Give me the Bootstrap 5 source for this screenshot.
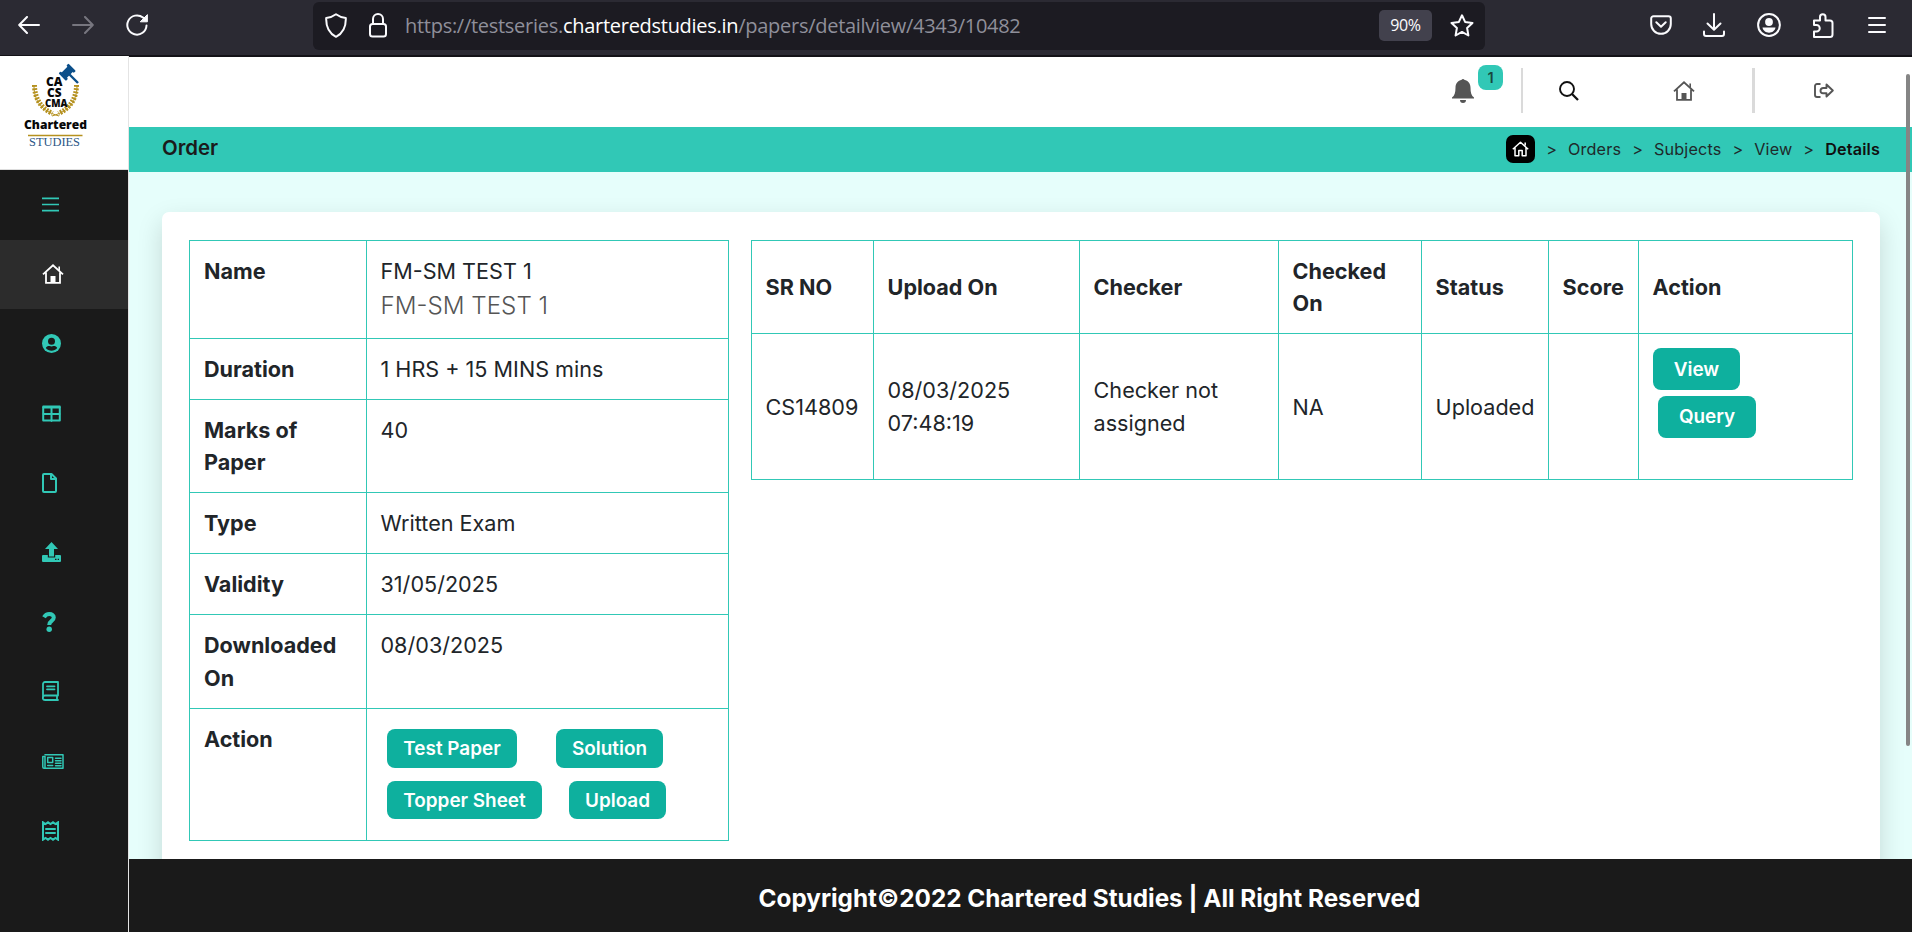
<!DOCTYPE html>
<html lang="en">
<head>
<meta charset="utf-8">
<meta name="viewport" content="width=device-width, initial-scale=1">
<title>Order details</title>
<link href="https://cdn.jsdelivr.net/npm/bootstrap@5.3.0/dist/css/bootstrap.min.css" rel="stylesheet">
<style>
:root{--teal:#31c8b6;--deep:#0eb09e;--ink:#1a1a1a}
body{height:100vh;overflow:hidden;font-family:Inter,"Liberation Sans",sans-serif;font-size:21.6px;line-height:1.5;color:#212529;background:#e6fefb}
svg{display:block;flex:none}
.s{fill:none;stroke:currentColor;stroke-width:2;stroke-linecap:round;stroke-linejoin:round}
/* browser bar */
.toolbar{height:57px;background:#2b2a33;border-bottom:2px solid #131217;color:#fbfbfe;padding:0 26px 5px 18px}
.urlbox{width:1172px;height:48px;margin:1px 0 0 165px;background:#1c1b22;border-radius:6px;padding:0 11px 0 12px;font-family:"Open Sans","Noto Sans",sans-serif;font-size:20px;color:#8f8f9a;white-space:nowrap}
.urltext{letter-spacing:-.28px;padding-top:1px}
.zoomlvl{background:#42414d;border-radius:5px;width:53px;height:31px;font-size:16px;line-height:31px;color:#fbfbfe;letter-spacing:-.4px}
.fwd{margin-left:32px;color:#77767f}
.reload{margin-left:32px}
/* sidebar */
.sidebar{width:129px;background:var(--ink);border-right:1px solid #e4e4e4;margin-top:-1px;position:relative;z-index:2}
.logo{height:114px;background:#fff;border-bottom:1px solid #ddd}
.side-link{height:69.6px;padding:0 0 1px 42px;color:var(--teal)}
.side-link.active{background:#2c2c2c;color:#fff}
/* header */
.topbar{height:70px;background:#fff;color:#555;padding-bottom:3px}
.bellbadge{width:25px;height:25px;border-radius:8px;background:var(--teal);font-size:14.5px;font-weight:600;line-height:25px;color:#17483f;top:-13px;left:26px}
.divide{height:45px;background:#dadada}
.crumbs{height:45px;background:var(--teal);padding:0 32px 0 33px;color:#1f2a2b}
.page-name{font-size:20.4px;font-weight:600;line-height:42px;color:#1b1b1b}
.trail{font-size:16.2px;letter-spacing:.15px;padding-bottom:1px}
.here{color:#101010}
.homebox{width:29px;height:28px;border-radius:7px;background:#000;color:#fff}
/* main */
.main-area{padding:40px 32px 0 33px;min-height:0}
.panel{background:#fff;border-radius:7px 7px 0 0;padding:28px 27px 0;height:700px;box-shadow:0 10px 26px rgba(0,0,0,.15)}
.grid-table{border-collapse:collapse;table-layout:fixed;margin:0}
.grid-table td,.grid-table th{border:1px solid var(--teal);padding:14px 13px 0 14px;text-align:left;vertical-align:top;font-weight:400}
.grid-table th{font-weight:700}
.grid-table td{padding-left:13.5px}
.paper{width:540px}
.results{width:1102px;margin-left:22px!important;line-height:33px}
.grid-table.results td,.grid-table.results th{vertical-align:middle;padding:1px 0 0 13.6px}
.grid-table.results th{line-height:32px;padding-top:0}
.subname{font-size:24.2px;font-weight:300;color:#555;line-height:38px}
.act{background:var(--deep);color:#fff;border:0;border-radius:8px;font-size:18.9px;font-weight:600;padding:2px 0 0;line-height:1;height:38.5px}
.act:hover{background:#0a9a8a;color:#fff}
.foot{height:73px;background:var(--ink);color:#fff;font-size:24.3px;font-weight:700;padding-top:5px}
.scrollthumb{position:absolute;z-index:5;left:1906px;top:74px;width:4px;height:672px;border-radius:2px;background:#858585}
</style>
</head>
<body class="d-flex flex-column">
<svg width="0" height="0" class="position-absolute">
<symbol id="house" viewBox="0 0 22 20"><path fill="none" stroke="currentColor" stroke-width="1.8" d="M1 10.300 11 1.300l10 9M4 8.500v10.400h14V8.500"/><path fill="currentColor" d="M8.500 12h5v7h-5z"/><path stroke="currentColor" stroke-width="1.600" d="M17.200 2.600v4"/></symbol>
</svg>

<header class="toolbar d-flex align-items-center flex-shrink-0">
  <svg class="s" width="22" height="18" viewBox="0 0 22 18"><path d="M21 9H1.500M9 1 1.200 9 9 17"/></svg>
  <svg class="s fwd" width="22" height="18" viewBox="0 0 22 18"><path d="M1 9h19.500M13 1l7.800 8L13 17"/></svg>
  <svg class="s reload" width="22" height="22" viewBox="0 0 22 22"><path d="M20.500 11.500A9.600 9.600 0 1 1 17 3.600L20 6.400"/><path fill="currentColor" stroke-width="1" d="M21.400 1v6.800h-6.800z"/></svg>
  <div class="urlbox d-flex align-items-center">
    <svg class="s" width="22" height="25" viewBox="0 0 22 25"><path d="M11 1.200c3 2.200 6.200 3.400 9.800 3.800.3 8.500-2.500 15-9.800 18.800C3.700 20 .9 13.500 1.200 5 4.800 4.600 8 3.400 11 1.200z" stroke="#fbfbfe"/></svg>
    <svg class="s" width="18" height="25" viewBox="0 0 18 25" style="margin-left:22px"><g stroke="#fbfbfe"><rect x="1" y="11" width="16" height="12.500" rx="2.500"/><path d="M4 11V6a5 5 0 0 1 10 0v5"/></g></svg>
    <span class="urltext" style="margin-left:18px">https://testseries.<span class="text-white">charteredstudies.in</span>/papers/detailview/4343/10482</span>
    <span class="zoomlvl text-center ms-auto">90%</span>
    <svg class="s" width="24" height="23" viewBox="0 0 24 23" style="margin-left:18px"><path stroke="#fbfbfe" d="m12 1.300 3.100 6.600 7.400 1-5.400 5.100 1.300 7.500-6.400-3.600-6.400 3.600L6.900 14 1.500 8.900l7.400-1z"/></svg>
  </div>
  <svg class="s ms-auto" width="22" height="20" viewBox="0 0 22 20"><path d="M3.500 1.200h15a2.300 2.300 0 0 1 2.300 2.300V9a9.800 9.800 0 0 1-19.600 0V3.500a2.300 2.300 0 0 1 2.300-2.300z"/><path d="m6.300 7.300 4.700 4.500 4.700-4.500"/></svg>
  <svg class="s" width="22" height="24" viewBox="0 0 22 24" style="margin-left:31px"><path d="M11 1v15.500M4.500 10.500 11 16.700l6.500-6.200M1 18.500V21a2 2 0 0 0 2 2h16a2 2 0 0 0 2-2v-2.500"/></svg>
  <svg width="24" height="24" viewBox="0 0 24 24" style="margin-left:32px"><circle class="s" cx="12" cy="12" r="10.900"/><circle cx="12" cy="9" r="3.900" fill="currentColor"/><path fill="currentColor" d="M5.500 14.500h13c-.6 3.300-3.300 5.200-6.500 5.200s-5.900-1.900-6.500-5.200z"/></svg>
  <svg class="s" width="22" height="25" viewBox="0 0 22 25" style="margin-left:31px"><path d="M2 10.500V7.500h6V4a2.700 2.700 0 0 1 5.500 0v3.500H18a2.500 2.500 0 0 1 2.500 2.500v11.500A2.500 2.500 0 0 1 18 24H2v-5.500h2.500a3 3 0 0 0 0-6.500H2z"/></svg>
  <svg class="s" width="18" height="16" viewBox="0 0 18 16" style="margin-left:34px"><path d="M1 1h16M1 8h16M1 15h16"/></svg>
</header>

<div class="d-flex flex-grow-1" style="min-height:0">
  <aside class="sidebar flex-shrink-0">
    <div class="logo">
      <svg width="128" height="112" viewBox="0 56 128 112">
        <g fill="#0b4f8a" transform="rotate(-45 67 72)"><rect x="61.500" y="68.500" width="11" height="7.500"/><rect x="60" y="67" width="3" height="10.500" rx="1"/><rect x="71" y="67" width="3" height="10.500" rx="1"/></g>
        <path d="m69 74 9 9" stroke="#0b4f8a" stroke-width="2.400"/>
        <g fill="none" stroke="#b5911f"><path stroke-width="1" d="M34 86c0 14 7 25 25 30M77 86c0 14-7 25-25 30"/><path stroke-width="5" stroke-dasharray="1.900 1.300" d="M34.500 85c0 13 6 23 18 28.500M76.500 85c0 13-6 23-18 28.500"/></g>
        <g font-family="Open Sans, Noto Sans, sans-serif" font-weight="800" fill="#080808">
          <text x="46" y="86.300" font-size="11.500" textLength="16.500" lengthAdjust="spacingAndGlyphs">CA</text>
          <text x="47" y="97.300" font-size="11.500" textLength="14.500" lengthAdjust="spacingAndGlyphs">CS</text>
          <text x="45" y="107" font-size="9.800" textLength="22.500" lengthAdjust="spacingAndGlyphs">CMA</text>
          <text x="24" y="129" font-size="13" textLength="63" lengthAdjust="spacingAndGlyphs">Chartered</text></g>
        <path d="M28 135.500h54.500" stroke="#b5911f" stroke-width="1.600"/>
        <text x="29" y="146.300" font-family="Liberation Serif, serif" font-size="13" fill="#2b5585" textLength="51" lengthAdjust="spacingAndGlyphs">STUDIES</text>
      </svg>
    </div>
    <nav class="nav flex-column">
      <a class="side-link d-flex align-items-center" href="#"><svg width="17" height="15" viewBox="0 0 17 15"><path stroke="currentColor" stroke-width="1.700" d="M0 1.300h17M0 7.500h17M0 13.700h17"/></svg></a>
      <a class="side-link d-flex align-items-center active" href="#"><svg width="22" height="20"><use href="#house"/></svg></a>
      <a class="side-link d-flex align-items-center" href="#"><svg width="19" height="19" viewBox="0 0 19 19"><circle cx="9.500" cy="9.500" r="9.500" fill="currentColor"/><circle cx="9.500" cy="7.200" r="3.500" fill="#1a1a1a"/><path fill="#1a1a1a" d="M3.800 14c1-1.700 2.400-2.200 3.800-1.900 1.300.4 2.500.4 3.800 0 1.400-.3 2.800.2 3.800 1.900-2.900 3.500-8.500 3.500-11.400 0z"/></svg></a>
      <a class="side-link d-flex align-items-center" href="#"><svg class="s" width="19" height="17" viewBox="0 0 19 17"><path d="M1.200 1.500h16.600v14H1.200zM1 2.500h17M9.500 2v14M1 9h17"/></svg></a>
      <a class="side-link d-flex align-items-center" href="#"><svg class="s" width="15" height="20" viewBox="0 0 15 20"><path d="M2 1h7.500L14 5.500V18a1 1 0 0 1-1 1H2a1 1 0 0 1-1-1V2a1 1 0 0 1 1-1zM9 1v5h5"/></svg></a>
      <a class="side-link d-flex align-items-center" href="#"><svg width="19" height="20" viewBox="0 0 19 20" fill="currentColor"><path d="M9.500 0 16 7h-4v7.500H7V7H3zM1 13h4.800v2.500h7.400V13H18a1 1 0 0 1 1 1v5a1 1 0 0 1-1 1H1a1 1 0 0 1-1-1v-5a1 1 0 0 1 1-1z"/><path fill="#1a1a1a" d="M13 16.700h1.500v1.300H13zM15.700 16.700h1.300v1.300h-1.300z"/></svg></a>
      <a class="side-link d-flex align-items-center" href="#"><svg width="15" height="20" viewBox="0 0 15 20"><path fill="none" stroke="currentColor" stroke-width="4" d="M2 5.300C3.300 2.900 5 2 7.300 2c2.800 0 4.500 1.500 4.500 3.500 0 3.600-4.600 3.300-4.600 7.500"/><circle cx="7.200" cy="17.300" r="2.700" fill="currentColor"/></svg></a>
      <a class="side-link d-flex align-items-center" href="#"><svg class="s" style="stroke-width:1.800" width="17" height="20" viewBox="0 0 17 20"><path d="M16 14.500H3a2.200 2.200 0 0 0 0 4.500h13M16 1H3a2 2 0 0 0-2 2v14M16 1v13.500M15 15v4M5 5.300h7.500M5 8.300h7.500"/></svg></a>
      <a class="side-link d-flex align-items-center" href="#"><svg class="s" style="stroke-width:1.500" width="22" height="15" viewBox="0 0 22 15"><path d="M3 .8h18v13.400H2A1.200 1.200 0 0 1 .8 13V2.500H3v10.800M5.700 3.500h5v5h-5zM13.500 4.200H19M13.500 6.700H19M13.500 9.200H19M5.700 11.400h5M13.500 11.700H19"/></svg></a>
      <a class="side-link d-flex align-items-center" href="#"><svg class="s" style="stroke-width:2;stroke-linejoin:miter" width="17" height="20" viewBox="0 0 17 20"><path d="M1 1.300 3.500 3 6 1.300 8.500 3 11 1.300 13.500 3 16 1.300v17.400L13.500 17 11 18.700 8.500 17 6 18.700 3.500 17 1 18.700zM4 8h9M4 12h9"/></svg></a>
    </nav>
  </aside>

  <div class="d-flex flex-column flex-grow-1" style="min-width:0">
    <div class="topbar d-flex align-items-center justify-content-end flex-shrink-0">
      <div class="position-relative" style="margin-right:47px"><svg width="22" height="25" viewBox="0 0 22 25" fill="currentColor"><path d="M9.700 1.800a1.400 1.400 0 0 1 2.600 0c3.800.8 6.200 3.700 6.200 7.700 0 5 .9 8.500 3.500 10v1H0v-1c2.600-1.500 3.500-5 3.500-10 0-4 2.400-6.900 6.200-7.700zM8 22h6a3 3 0 0 1-6 0z"/></svg><span class="bellbadge position-absolute text-center">1</span></div>
      <div class="divide" style="width:2px"></div>
      <svg width="20" height="20" viewBox="0 0 20 20" style="margin-left:36px;color:#111"><circle cx="8" cy="8" r="7" fill="none" stroke="currentColor" stroke-width="1.900"/><path d="m13 13 6 6" stroke="currentColor" stroke-width="2.300"/></svg>
      <svg width="22" height="20" style="margin-left:94px"><use href="#house"/></svg>
      <div class="divide" style="width:3px;margin-left:57px"></div>
      <svg class="s" style="stroke-width:1.900;margin:0 78px 0 59px" width="20" height="15" viewBox="0 0 20 15"><path d="M5.800 1H3a2 2 0 0 0-2 2v9a2 2 0 0 0 2 2h2.800M12.500 1.500l6.300 6-6.300 6v-3.300H9A2.500 2.500 0 0 1 6.500 7.700 2.800 2.800 0 0 1 9.300 5h3.200z"/></svg>
    </div>
    <div class="crumbs d-flex justify-content-between flex-shrink-0">
      <div class="page-name">Order</div>
      <nav class="trail d-flex align-items-center">
        <span class="homebox d-flex align-items-center justify-content-center"><svg class="s" style="stroke-width:1.500;stroke-linecap:butt" width="17" height="16" viewBox="0 0 17 16"><path d="m.8 8.300 7.700-7 7.700 7M3 6.500v8.300h3.800V9.500h3.400v5.300H14V6.500M13.200 1.500v3"/></svg></span>
        <span style="margin:0 11px">&gt;</span><span>Orders</span><span style="margin:0 11px">&gt;</span><span>Subjects</span><span style="margin:0 11px">&gt;</span><span>View</span><span style="margin:0 11px">&gt;</span><span class="fw-semibold here">Details</span>
      </nav>
    </div>
    <main class="main-area flex-grow-1 overflow-hidden">
      <section class="panel d-flex align-items-start">
        <table class="grid-table paper flex-shrink-0">
          <colgroup><col style="width:177px"><col></colgroup>
          <tr style="height:98px"><th>Name</th><td>FM-SM TEST 1<div class="subname">FM-SM TEST 1</div></td></tr>
          <tr style="height:61px"><th>Duration</th><td>1 HRS + 15 MINS mins</td></tr>
          <tr style="height:93px"><th>Marks of Paper</th><td>40</td></tr>
          <tr style="height:61px"><th>Type</th><td>Written Exam</td></tr>
          <tr style="height:61px"><th>Validity</th><td>31/05/2025</td></tr>
          <tr style="height:94px"><th style="line-height:33px">Downloaded On</th><td>08/03/2025</td></tr>
          <tr style="height:132px"><th>Action</th><td style="padding:20px 0 0 20px">
            <div class="d-flex" style="gap:39px"><button class="btn act" style="width:130px">Test Paper</button><button class="btn act" style="width:107px">Solution</button></div>
            <div class="d-flex" style="gap:27px;margin-top:13px"><button class="btn act" style="width:155px;padding-top:3px">Topper Sheet</button><button class="btn act" style="width:97px;padding-top:3px">Upload</button></div></td></tr>
        </table>
        <table class="grid-table results flex-shrink-0">
          <colgroup><col style="width:122px"><col style="width:206px"><col style="width:199px"><col style="width:143px"><col style="width:127px"><col style="width:90px"><col></colgroup>
          <tr style="height:93px"><th>SR NO</th><th>Upload On</th><th>Checker</th><th>Checked<br>On</th><th>Status</th><th>Score</th><th>Action</th></tr>
          <tr style="height:146px"><td>CS14809</td><td>08/03/2025<br>07:48:19</td><td>Checker not<br>assigned</td><td>NA</td><td>Uploaded</td><td></td>
            <td style="padding:14px 0 0 14px;vertical-align:top"><button class="btn act d-block" style="width:87px;height:42px">View</button><button class="btn act d-block" style="width:98px;height:42px;margin:6px 0 0 5px;padding-top:1px">Query</button></td></tr>
        </table>
      </section>
    </main>
    <footer class="foot d-flex align-items-center justify-content-center flex-shrink-0"><span style="margin-left:138px">Copyright©2022 Chartered Studies | All Right Reserved</span></footer>
  </div>
</div>
<div class="scrollthumb"></div>
<script src="https://cdn.jsdelivr.net/npm/bootstrap@5.3.0/dist/js/bootstrap.bundle.min.js"></script>
</body>
</html>
